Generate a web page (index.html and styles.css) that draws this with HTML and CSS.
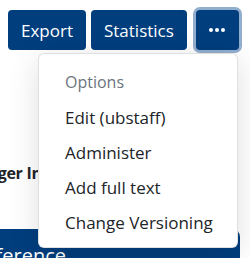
FILE: index.html
```html
<!DOCTYPE html>
<html>
<head>
<meta charset="utf-8">
<link rel="stylesheet" href="styles.css">
</head>
<body>
<div class="page">
  <div class="toolbar">
    <button class="btn">Export</button>
    <button class="btn">Statistics</button>
    <button class="btn btn-more" aria-label="More">
      <svg width="16" height="4" viewBox="0 0 16 4"><circle cx="2" cy="2" r="2" fill="#fff"/><circle cx="8" cy="2" r="2" fill="#fff"/><circle cx="14" cy="2" r="2" fill="#fff"/></svg>
    </button>
  </div>
  <h3 class="section-title">Manager Information</h3>
  <div class="ref-bar">Reference</div>
  <div class="menu">
    <div class="menu-header">Options</div>
    <div class="menu-item">Edit (ubstaff)</div>
    <div class="menu-item">Administer</div>
    <div class="menu-item">Add full text</div>
    <div class="menu-item">Change Versioning</div>
  </div>
</div>
</body>
</html>
```
FILE: styles.css
```css
html, body {
  margin: 0;
  padding: 0;
  background: #fff;
  overflow: hidden;
}
body {
  font-family: "Open Sans", "Noto Sans", sans-serif;
  color: #212529;
}
.page {
  position: relative;
  width: 250px;
  height: 258px;
}
.toolbar {
  display: flex;
  padding: 10px 0 0 8px;
  gap: 5px;
}
.btn {
  height: 40px;
  padding: 0 13px;
  background: #003e7e;
  color: #fff;
  border: none;
  border-radius: 4px;
  font-family: inherit;
  font-size: 17px;
  display: flex;
  align-items: center;
  justify-content: center;
}
.btn-more {
  margin-left: 4px;
  width: 43px;
  padding: 0;
  box-shadow: 0 0 0 3px rgba(100, 140, 185, 0.7);
}
.section-title {
  margin: 113px 0 0 -46px;
  font-size: 16px;
  font-weight: 700;
  line-height: 20px;
  letter-spacing: -0.3px;
  white-space: nowrap;
}
.ref-bar {
  margin: 46px 0 0 -33px;
  width: 273px;
  height: 40px;
  background: #003e7e;
  border-radius: 0 8px 8px 0;
  color: #fff;
  font-size: 20px;
  line-height: 22px;
  padding: 16px 0 0 5px;
  box-sizing: border-box;
}
.menu {
  position: absolute;
  left: 38px;
  top: 53px;
  width: 200px;
  height: 195px;
  box-sizing: border-box;
  background: #fff;
  border: 1px solid rgba(0, 0, 0, 0.12);
  border-radius: 6px;
  box-shadow: 0 6px 30px rgba(0, 0, 0, 0.13);
  padding-top: 11px;
}
.menu-header,
.menu-item {
  height: 35px;
  line-height: 35px;
  padding-left: 26px;
  font-size: 17px;
  white-space: nowrap;
}
.menu-header {
  color: #6c757d;
  font-size: 16px;
}
```
